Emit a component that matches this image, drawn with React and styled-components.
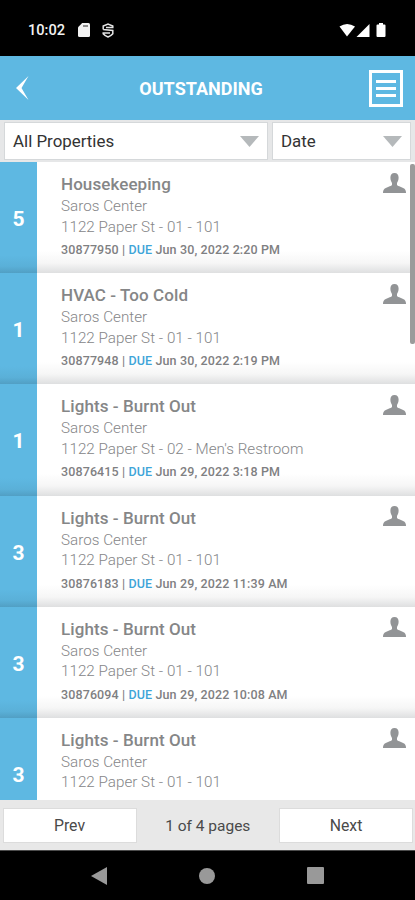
import React from 'react';
import styled, { createGlobalStyle } from 'styled-components';

const GlobalStyle = createGlobalStyle`
  * {
    box-sizing: border-box;
  }
  body {
    margin: 0;
    background-color: #000000;
    font-family: Roboto, 'Liberation Sans', sans-serif;
  }
  button {
    font-family: inherit;
  }
`;

const Screen = styled.div`
  display: flex;
  flex-direction: column;
  width: 415px;
  height: 900px;
  overflow: hidden;
  background-color: #e8e8e8;
`;

const StatusBar = styled.div`
  display: flex;
  align-items: center;
  flex: none;
  height: 56px;
  padding: 4px 28px 0 28px;
  color: #f2f2f2;
  background-color: #000000;
  svg {
    display: block;
  }
`;

const Clock = styled.span`
  width: 50px;
  font-size: 14.6px;
  font-weight: 500;
`;

const StatusIcons = styled.div`
  display: flex;
  align-items: center;
  gap: ${(props) => props.$gap};
  margin-left: ${(props) => props.$push || '0'};
`;

const Header = styled.header`
  display: flex;
  align-items: center;
  justify-content: space-between;
  flex: none;
  height: 64px;
  padding: 0 12px 0 15px;
  background-color: #5eb8e2;
`;

const HeaderButton = styled.button`
  display: flex;
  width: ${(props) => props.$width};
  padding: 0;
  border: none;
  background-color: transparent;
  cursor: pointer;
`;

const Title = styled.h1`
  margin: 1px 0 0;
  color: #ffffff;
  font-size: 18px;
  font-weight: 700;
`;

const Filters = styled.div`
  display: flex;
  gap: 4px;
  flex: none;
  height: 42px;
  padding: 2px 4px 1px 4px;
  background-color: #e6e7e8;
`;

const Filter = styled.button`
  display: flex;
  align-items: center;
  justify-content: space-between;
  width: ${(props) => props.$width};
  height: 38px;
  padding: 0 8px;
  border: 1px solid #d5d8da;
  color: #333333;
  background-color: #ffffff;
  font-size: 16.9px;
  font-weight: 400;
  cursor: pointer;
`;

const List = styled.div`
  position: relative;
  flex: none;
  height: 638px;
  overflow: hidden;
  background-color: #ffffff;
`;

const Scrollbar = styled.div`
  position: absolute;
  top: 2px;
  right: 0;
  width: 5px;
  height: 180px;
  border-radius: 2px;
  background-color: #9b9b9b;
`;

const Row = styled.div`
  display: flex;
  height: 111.2px;
  background: linear-gradient(to bottom, #ffffff 80%, #f6f6f6 91%, #dedfe0 100%);
`;

const Priority = styled.div`
  display: flex;
  align-items: center;
  justify-content: center;
  width: 37px;
  padding-top: 3px;
  color: #ffffff;
  background: linear-gradient(to bottom, #5eb8e2 84%, #5ab0d8 94%, #519fc4 100%);
  font-size: 21px;
  font-weight: 700;
`;

const Details = styled.div`
  flex: 1;
  padding: 11px 0 0 24px;
  color: #858688;
`;

const Name = styled.div`
  color: #858687;
  height: 22px;
  font-size: 17px;
  font-weight: 500;
  line-height: 22px;
  letter-spacing: 0.08px;
`;

const Place = styled.div`
  height: 20.5px;
  font-size: 15.2px;
  font-weight: 300;
  line-height: 22px;
  letter-spacing: 0.02px;
`;

const Meta = styled.div`
  margin-top: 5px;
  color: #7f8082;
  font-size: 12.5px;
  font-weight: 500;
  line-height: 17px;
  letter-spacing: 0.12px;
`;

const Due = styled.span`
  color: #3fa5d8;
`;

const Person = styled.svg`
  flex: none;
  width: 23px;
  height: 20px;
  margin: 10.5px 9px 0 0;
  fill: #929496;
`;

const Footer = styled.div`
  display: flex;
  align-items: center;
  justify-content: space-between;
  flex: none;
  height: 50px;
  padding: 0 2px 0 2.5px;
  color: #4a4a4a;
  background-color: #e8e8e8;
  font-size: 15.5px;
`;

const PageButton = styled.button`
  width: 134px;
  height: 35px;
  padding: 1px 0 0;
  border: 1px solid #dcdcdc;
  color: #4a4a4a;
  background-color: #ffffff;
  font-size: 15.8px;
  cursor: pointer;
`;

const PageCount = styled.span`
  padding-top: 1px;
`;

const NavBar = styled.div`
  display: flex;
  align-items: center;
  justify-content: space-between;
  flex: none;
  height: 50px;
  padding: 0 91px;
  border-top: 1px solid #4c4c4c;
  background-color: #000000;
  svg {
    display: block;
    fill: #999999;
  }
`;

const orders = [
  { id: '30877950', priority: 5, name: 'Housekeeping', room: '01 - 101', due: 'Jun 30, 2022 2:20 PM' },
  { id: '30877948', priority: 1, name: 'HVAC - Too Cold', room: '01 - 101', due: 'Jun 30, 2022 2:19 PM' },
  { id: '30876415', priority: 1, name: 'Lights - Burnt Out', room: "02 - Men's Restroom", due: 'Jun 29, 2022 3:18 PM' },
  { id: '30876183', priority: 3, name: 'Lights - Burnt Out', room: '01 - 101', due: 'Jun 29, 2022 11:39 AM' },
  { id: '30876094', priority: 3, name: 'Lights - Burnt Out', room: '01 - 101', due: 'Jun 29, 2022 10:08 AM' },
  { id: 'last', priority: 3, name: 'Lights - Burnt Out', room: '01 - 101' },
];

function Arrow() {
  return (
    <svg width="19" height="11" viewBox="0 0 19 11" fill="#b5b9bb">
      <path d="M0 0h19L9.5 11z" />
    </svg>
  );
}

function Order({ order }) {
  return (
    <Row>
      <Priority>{order.priority}</Priority>
      <Details>
        <Name>{order.name}</Name>
        <Place>Saros Center</Place>
        <Place>1122 Paper St - {order.room}</Place>
        {order.due && (
          <Meta>
            {order.id} | <Due>DUE</Due> {order.due}
          </Meta>
        )}
      </Details>
      <Person viewBox="0 0 23 20">
        <path d="M11.5 0C14.300 0 15.600 1.800 15.600 4.600C15.600 7 14.900 8.600 14 10V12C15 13.400 19.500 14 21.500 15.800C22.700 17 23 18.300 23 20H0C0 18.300 .3 17 1.500 15.800C3.500 14 8 13.400 9 12V10C8.100 8.600 7.400 7 7.400 4.600C7.400 1.800 8.700 0 11.500 0Z" />
      </Person>
    </Row>
  );
}

function App() {
  return (
    <Screen>
      <GlobalStyle />
      <StatusBar>
        <Clock>10:02</Clock>
        <StatusIcons $gap="12px">
          <svg width="12" height="14" viewBox="0 0 12 14">
            <path d="M4.200 0H10.500Q12 0 12 1.500V12.500Q12 14 10.500 14H1.500Q0 14 0 12.500V4.200Z" fill="#f2f2f2" />
            <path d="M5 3H10" stroke="#555555" strokeWidth="1.300" />
          </svg>
          <svg width="12" height="15" viewBox="0 0 12 15" fill="none" stroke="#e5e5e5" strokeWidth="1.500">
            <path d="M1.200 6.500V3L6 1L10.800 3V4.500H4M1.200 6.500L10.800 7.500V10.800Q9 13 6 14Q3 13 1.200 10.800V10H8" />
          </svg>
        </StatusIcons>
        <StatusIcons $gap="0" $push="auto">
          <svg width="48" height="15" viewBox="0 0 48 15" fill="#ffffff">
            <path d="M0.500 3.500Q8 -1.500 16 3.500L8 13.500Z" />
            <path d="M30.500 1V14H17.500Z" />
            <path d="M40 0H44V1.500H45.500Q46.500 1.500 46.500 2.500V13Q46.500 14 45.500 14H38.500Q37.500 14 37.500 13V2.500Q37.500 1.500 38.500 1.500H40Z" />
          </svg>
        </StatusIcons>
      </StatusBar>
      <Header>
        <HeaderButton $width="18px" aria-label="Back">
          <svg width="15" height="24" viewBox="0 0 15 24" fill="#ffffff">
            <path d="M13.500 0L1 12L13.500 24L6.500 12Z" />
          </svg>
        </HeaderButton>
        <Title>OUTSTANDING</Title>
        <HeaderButton $width="34px" aria-label="Menu">
          <svg width="34" height="37" viewBox="0 0 34 37" fill="none" stroke="#ffffff">
            <rect x="1.500" y="1.500" width="31" height="34" strokeWidth="3" />
            <path d="M7 11.500H27M7 18.500H27M7 25.500H27" strokeWidth="3" />
          </svg>
        </HeaderButton>
      </Header>
      <Filters>
        <Filter $width="264px">
          All Properties
          <Arrow />
        </Filter>
        <Filter $width="139px">
          Date
          <Arrow />
        </Filter>
      </Filters>
      <List>
        {orders.map((order) => (
          <Order key={order.id} order={order} />
        ))}
        <Scrollbar />
      </List>
      <Footer>
        <PageButton>Prev</PageButton>
        <PageCount>1 of 4 pages</PageCount>
        <PageButton>Next</PageButton>
      </Footer>
      <NavBar>
        <svg width="16" height="18" viewBox="0 0 16 18">
          <path d="M16 0V18L0 9Z" />
        </svg>
        <svg width="16" height="16" viewBox="0 0 16 16">
          <circle cx="8" cy="8" r="8" />
        </svg>
        <svg width="17" height="17" viewBox="0 0 17 17">
          <rect width="17" height="17" rx="1" />
        </svg>
      </NavBar>
    </Screen>
  );
}

export default App;
